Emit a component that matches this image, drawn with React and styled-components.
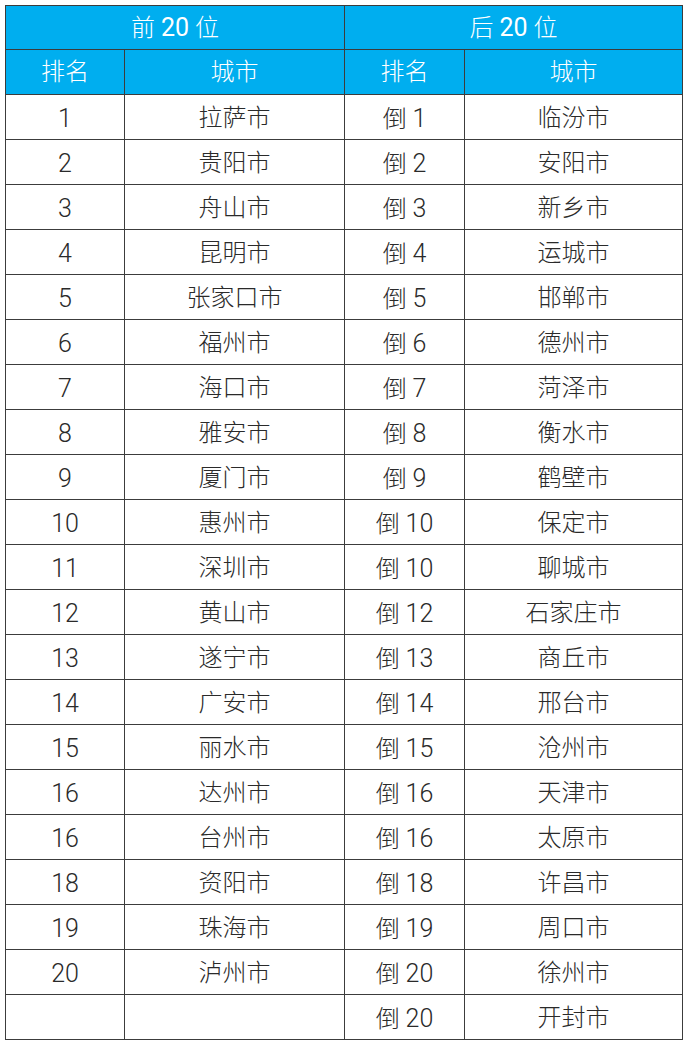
import React from "react";
import styled, { createGlobalStyle } from "styled-components";

const GlobalStyle = createGlobalStyle`
    html, body {
        margin: 0;
        padding: 0;
        background: #ffffff;
    }
    body {
        font-family: "Roboto", "Noto Sans CJK SC Light", "Noto Sans CJK SC", sans-serif;
    }
`;

const Page = styled.div`
    padding: 5px 0 0 5px;
`;

const Table = styled.table`
    border-collapse: collapse;
    table-layout: fixed;
    width: 677px;
    font-weight: 300;
    font-size: 24px;
    color: #2a2a2a;

    td,
    th {
        border: 1px solid #3c3c3c;
        text-align: center;
        padding: 2px 0 0;
        white-space: nowrap;
        line-height: 1;
    }
`;

const Col = styled.col`
    width: ${(p) => p.$w}px;
`;

const HeaderRow = styled.tr`
    height: ${(p) => p.$h}px;
    background: #00aeef;
    color: #ffffff;

    th {
        font-weight: 400;
        font-size: 24px;
        padding: 0;
    }
`;

const Row = styled.tr`
    height: 45px;
`;

const Num = styled.span`
    font-size: 25px;
`;

const top = [
    "拉萨市", "贵阳市", "舟山市", "昆明市", "张家口市", "福州市", "海口市",
    "雅安市", "厦门市", "惠州市", "深圳市", "黄山市", "遂宁市", "广安市",
    "丽水市", "达州市", "台州市", "资阳市", "珠海市", "泸州市",
];
const topRank = [1, 2, 3, 4, 5, 6, 7, 8, 9, 10, 11, 12, 13, 14, 15, 16, 16, 18, 19, 20];

const bottom = [
    "临汾市", "安阳市", "新乡市", "运城市", "邯郸市", "德州市", "菏泽市",
    "衡水市", "鹤壁市", "保定市", "聊城市", "石家庄市", "商丘市", "邢台市",
    "沧州市", "天津市", "太原市", "许昌市", "周口市", "徐州市", "开封市",
];
const bottomRank = [1, 2, 3, 4, 5, 6, 7, 8, 9, 10, 10, 12, 13, 14, 15, 16, 16, 18, 19, 20, 20];

const App = () => {
    return (
        <React.Fragment>
            <GlobalStyle />
            <Page>
                <Table>
                    <colgroup>
                        <Col $w={119} />
                        <Col $w={220} />
                        <Col $w={120} />
                        <Col $w={218} />
                    </colgroup>
                    <thead>
                        <HeaderRow $h={44}>
                            <th colSpan={2}>
                                前 <Num>20</Num> 位
                            </th>
                            <th colSpan={2}>
                                后 <Num>20</Num> 位
                            </th>
                        </HeaderRow>
                        <HeaderRow $h={45}>
                            <th>排名</th>
                            <th>城市</th>
                            <th>排名</th>
                            <th>城市</th>
                        </HeaderRow>
                    </thead>
                    <tbody>
                        {bottom.map((city, i) => (
                            <Row key={city}>
                                <td>
                                    <Num>{topRank[i] ?? ""}</Num>
                                </td>
                                <td>{top[i] ?? ""}</td>
                                <td>
                                    倒 <Num>{bottomRank[i]}</Num>
                                </td>
                                <td>{city}</td>
                            </Row>
                        ))}
                    </tbody>
                </Table>
            </Page>
        </React.Fragment>
    );
};

export default App;
